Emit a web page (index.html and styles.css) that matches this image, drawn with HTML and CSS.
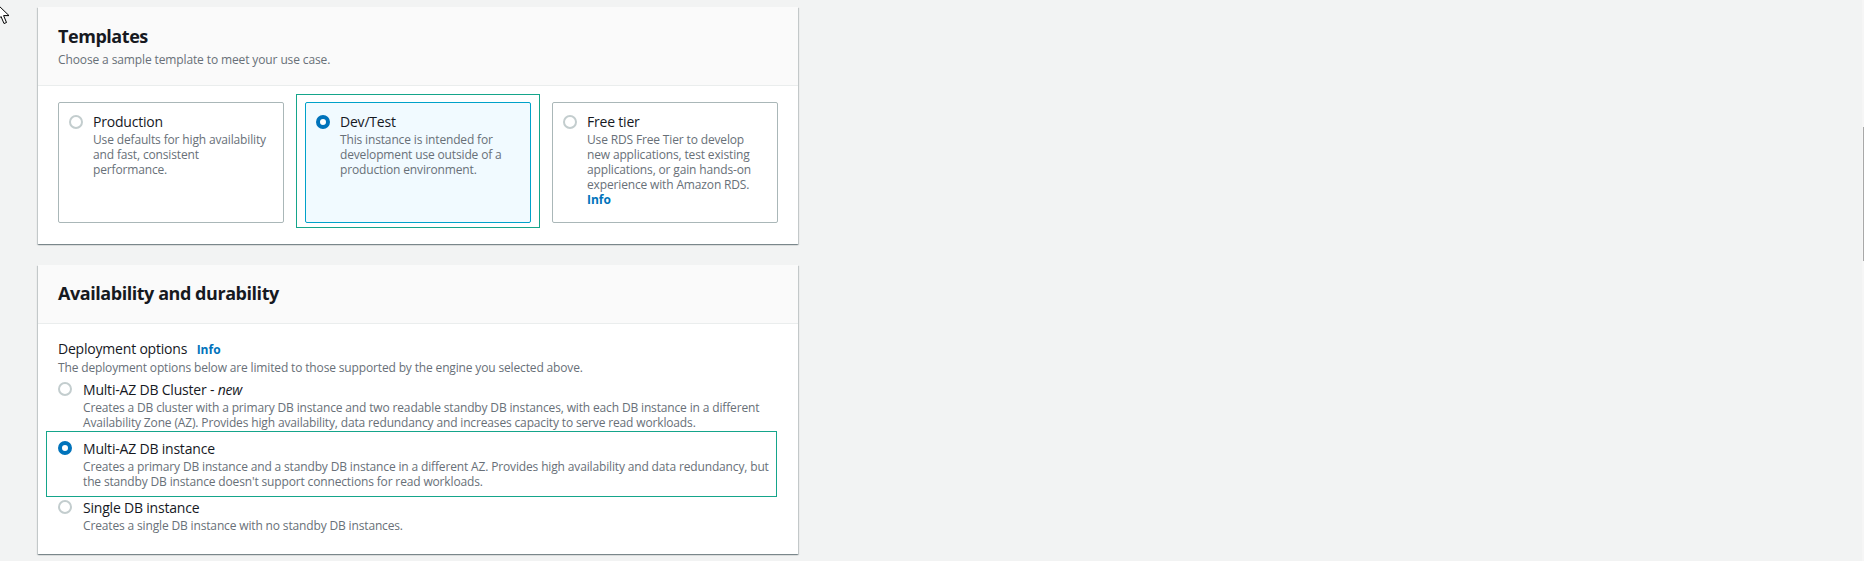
FILE: index.html
```html
<!DOCTYPE html>
<html>
<head>
<meta charset="utf-8">
<link rel="stylesheet" href="styles.css">
</head>
<body>
<svg class="cursor" width="14" height="26" viewBox="0 0 14 26"><path d="M-3 4 L-3 20.5 L1 16.5 L4 23.5 L6.5 22.5 L3.6 15.6 L9 15.6 Z" fill="#fff" stroke="#000" stroke-width="1" stroke-linejoin="round"/></svg>
<div class="scrollbar"><div class="thumb"></div></div>
<main class="page">
  <section class="card">
    <header class="card-header">
      <h2 class="card-title">Templates</h2>
      <p class="card-sub">Choose a sample template to meet your use case.</p>
    </header>
    <div class="card-body tiles-body">
      <div class="tiles">
        <div class="tile">
          <span class="radio"></span>
          <div class="tile-text">
            <div class="label">Production</div>
            <div class="desc">Use defaults for high availability and fast, consistent performance.</div>
          </div>
        </div>
        <div class="tile selected">
          <span class="radio on"></span>
          <div class="tile-text">
            <div class="label">Dev/Test</div>
            <div class="desc">This instance is intended for development use outside of a production environment.</div>
          </div>
        </div>
        <div class="tile">
          <span class="radio"></span>
          <div class="tile-text">
            <div class="label">Free tier</div>
            <div class="desc">Use RDS Free Tier to develop new applications, test existing applications, or gain hands-on experience with Amazon RDS.<br><a class="info">Info</a></div>
          </div>
        </div>
      </div>
    </div>
  </section>

  <section class="card">
    <header class="card-header single">
      <h2 class="card-title">Availability and durability</h2>
    </header>
    <div class="card-body options-body">
      <div class="field-label">Deployment options <a class="info">Info</a></div>
      <div class="field-desc">The deployment options below are limited to those supported by the engine you selected above.</div>
      <div class="options">
        <div class="option">
          <span class="radio"></span>
          <div class="opt-text">
            <div class="label">Multi-AZ DB Cluster - <i>new</i></div>
            <div class="desc">Creates a DB cluster with a primary DB instance and two readable standby DB instances, with each DB instance in a different<br>Availability Zone (AZ). Provides high availability, data redundancy and increases capacity to serve read workloads.</div>
          </div>
        </div>
        <div class="option selected">
          <span class="radio on"></span>
          <div class="opt-text">
            <div class="label">Multi-AZ DB instance</div>
            <div class="desc">Creates a primary DB instance and a standby DB instance in a different AZ. Provides high availability and data redundancy, but<br>the standby DB instance doesn't support connections for read workloads.</div>
          </div>
        </div>
        <div class="option">
          <span class="radio"></span>
          <div class="opt-text">
            <div class="label">Single DB instance</div>
            <div class="desc">Creates a single DB instance with no standby DB instances.</div>
          </div>
        </div>
      </div>
    </div>
  </section>
</main>
</body>
</html>
```

FILE: styles.css
```css
* { box-sizing: border-box; }
html, body { margin: 0; padding: 0; }
body {
  background: #f2f3f3;
  font-family: "Open Sans", "Noto Sans", sans-serif;
  color: #16191f;
  height: 561px;
  overflow: hidden;
}
.cursor { position: absolute; left: 0; top: 0; }
.scrollbar {
  position: fixed; right: 0; top: 0; width: 2px; height: 561px;
  background: #f6f6f6;
}
.scrollbar .thumb {
  margin-top: 127px; height: 134px; width: 1px; margin-left: 1px;
  background: #a8a8a8;
}
.page {
  display: flex; flex-direction: column; gap: 21px;
  padding: 7px 0 0 38px;
  width: 798px;
}
.card {
  background: #fff;
  box-shadow: 0 1px 1px 0 rgba(0,28,36,.3), 1px 1px 1px 0 rgba(0,28,36,.15), -1px 1px 1px 0 rgba(0,28,36,.15);
}
.card-header {
  background: #fafafa;
  border-bottom: 1px solid #eaeded;
  padding: 17px 20px 13px;
  height: 79px;
}
.card-header.single { height: 59px; padding-top: 16px; }
.card-title { margin: 0; font-size: 18px; font-weight: 700; line-height: 24px; letter-spacing: -0.45px; }
.card-sub { margin: 4px 0 0; font-size: 12px; line-height: 16px; color: #687078; letter-spacing: -0.12px; }
.card-body { padding: 16px 20px 21px; }
.tiles { display: grid; grid-template-columns: repeat(3, 1fr); gap: 21px; }
.tile {
  position: relative;
  border: 1px solid #aab7b8;
  border-radius: 2px;
  height: 121px;
  padding: 8px 10px;
  display: flex; gap: 10px;
}
.tile.selected { border-color: #00a1c9; background: #f1faff; }
.tile.selected::before {
  content: ""; position: absolute;
  left: -10px; right: -10px; top: -9px; bottom: -6px;
  border: 1px solid #15a58b;
}
.radio {
  flex: none;
  width: 14px; height: 14px; border-radius: 50%;
  border: 2px solid #c3cdce;
  background: #fff;
  margin-top: 4px;
}
.radio.on { border: 4px solid #0073bb; }
.label { font-size: 14px; line-height: 21px; letter-spacing: -0.2px; }
.desc { font-size: 12px; line-height: 15px; color: #687078; letter-spacing: -0.15px; }
.info { color: #0073bb; font-weight: 700; font-size: 12px; text-decoration: none; letter-spacing: 0; }
.options-body { padding-top: 14px; padding-bottom: 21px; }
.field-label { font-size: 14px; line-height: 21px; letter-spacing: -0.2px; }
.field-label .info { margin-left: 6px; }
.field-desc { font-size: 12px; line-height: 16px; color: #687078; letter-spacing: -0.15px; }
.options { display: flex; flex-direction: column; gap: 8px; margin-top: 3px; }
.option { position: relative; display: flex; gap: 11px; }
.option .radio { margin-top: 3px; }
.option.selected::before {
  content: ""; position: absolute;
  left: -12px; right: 1px; top: -7px; bottom: -8px;
  border: 1px solid #15a58b;
}
.opt-text .desc { white-space: nowrap; }
```
